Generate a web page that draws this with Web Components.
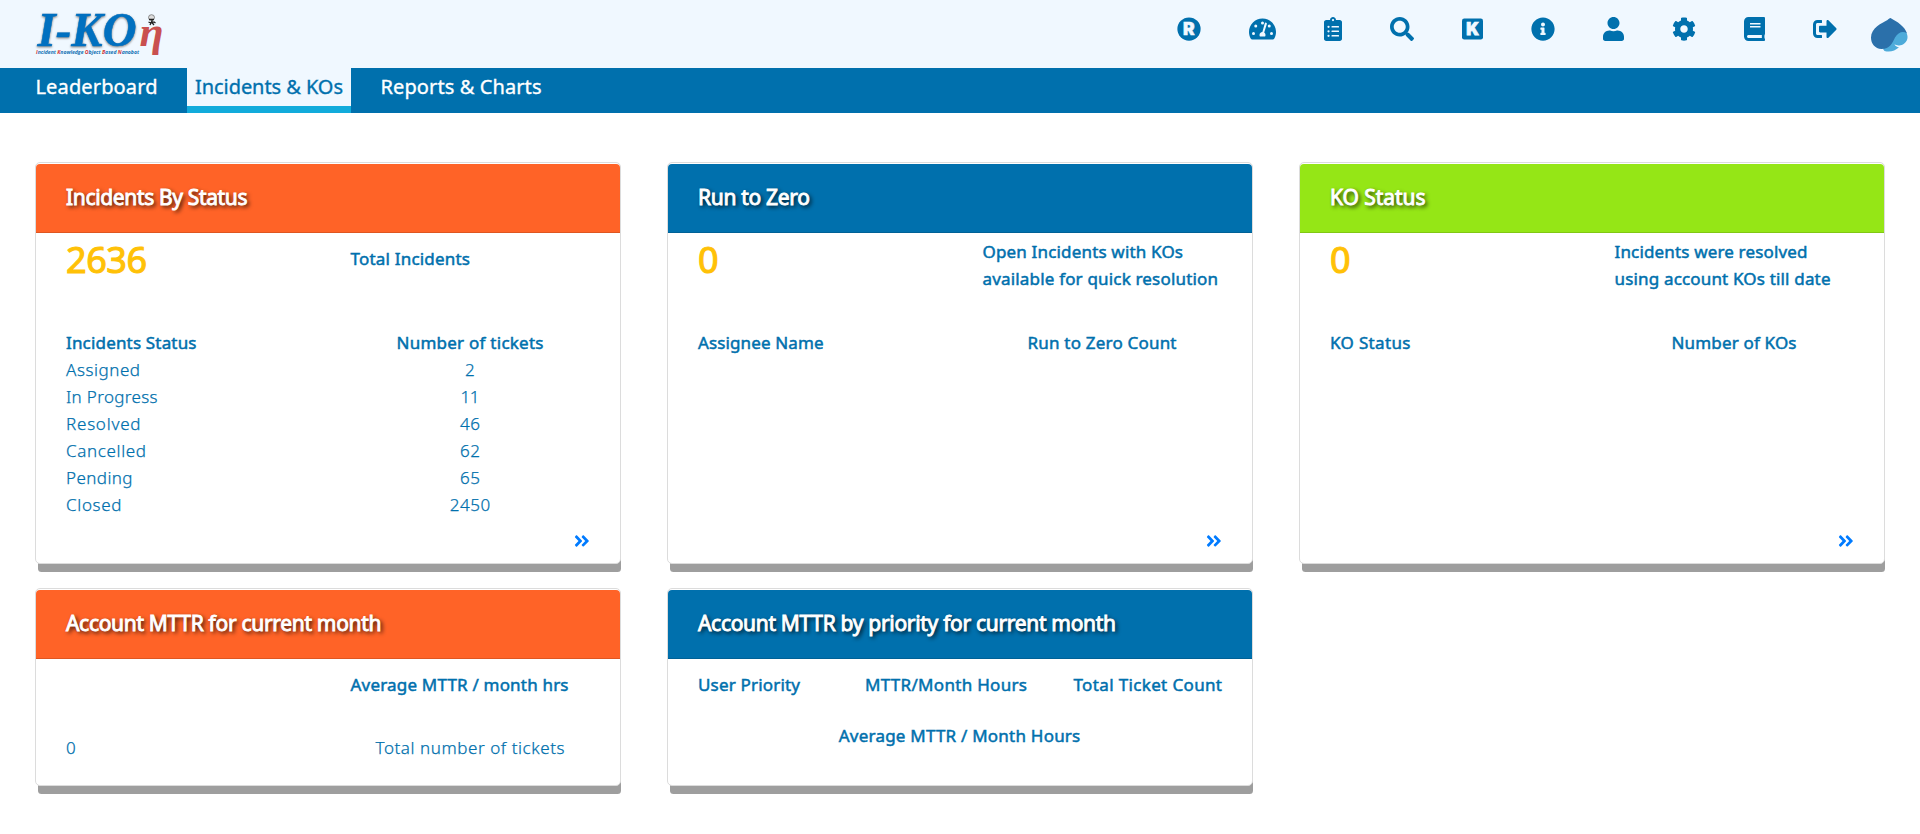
<!DOCTYPE html>
<html lang="en">
<head>
<meta charset="utf-8">
<title>I-KON</title>
<style>
html,body{margin:0;height:100%;background:#fff;overflow:hidden}
body{font-family:"Noto Sans","Open Sans",sans-serif;color:#0070ad;font-size:17px;line-height:27px}
</style>
</head>
<body>
<ikon-app></ikon-app>
<script>
const sheet = (host, html) => { host.attachShadow({mode:'open'}).innerHTML = html; return host.shadowRoot; };

/* Text run tracked to an exact measure given by the w attribute. */
class FitText extends HTMLElement {
  constructor(){ super(); sheet(this, `<style>:host{display:inline-block;white-space:nowrap;text-align:left}</style><span><slot></slot></span>`); }
  connectedCallback(){
    const w = parseFloat(this.getAttribute('w')), n = this.textContent.length;
    if(!w) return;
    const span = this.shadowRoot.querySelector('span');
    const natural = span.getBoundingClientRect().width;
    if(n > 1) span.style.letterSpacing = ((w - natural) / (n - 1)).toFixed(3) + 'px';
    this.style.width = w + 'px';
  }
}

const ICONS = {
  registered:[512,`<circle cx="256" cy="256" r="248"/><text x="254" y="390" text-anchor="middle" font-family="Inter" font-weight="900" font-size="372" fill="#f0f8ff" stroke="#f0f8ff" stroke-width="10">R</text>`],
  gauge:[576,`<path d="M288 32C128.94 32 0 160.94 0 320c0 52.8 14.25 102.26 39.06 144.8 5.61 9.62 16.3 15.2 27.44 15.2h443c11.14 0 21.83-5.58 27.44-15.2C561.75 422.26 576 372.8 576 320c0-159.06-128.94-288-288-288z"/><g fill="#f0f8ff"><circle cx="96" cy="352" r="32"/><circle cx="144" cy="192" r="32"/><circle cx="288" cy="128" r="32"/><circle cx="432" cy="192" r="32"/><circle cx="480" cy="352" r="32"/><path d="M336 136c4-13 16-20 29-16s20 17 16 30l-57 180c17 11 28 31 28 54 0 12-3 23-9 32H233c-6-9-9-20-9-32 0-34 27-62 61-64z"/></g>`],
  clipboard:[384,`<path d="M336 64h-80c0-35.300-28.700-64-64-64s-64 28.700-64 64H48C21.500 64 0 85.500 0 112v352c0 26.500 21.500 48 48 48h288c26.500 0 48-21.500 48-48V112c0-26.500-21.500-48-48-48z"/><g fill="#f0f8ff"><circle cx="192" cy="64" r="24"/><circle cx="96" cy="208" r="24"/><circle cx="96" cy="304" r="24"/><circle cx="96" cy="400" r="24"/><rect x="160" y="192" width="160" height="32" rx="8"/><rect x="160" y="288" width="160" height="32" rx="8"/><rect x="160" y="384" width="160" height="32" rx="8"/></g>`],
  search:[512,`<path d="M505 442.700L405.300 343c-4.500-4.500-10.600-7-17-7H372c27.600-35.300 44-79.700 44-128C416 93.100 322.900 0 208 0S0 93.100 0 208s93.100 208 208 208c48.300 0 92.700-16.400 128-44v16.300c0 6.400 2.500 12.500 7 17l99.700 99.700c9.400 9.400 24.600 9.400 33.900 0l28.300-28.300c9.400-9.400 9.400-24.600.1-34zM208 336c-70.700 0-128-57.200-128-128 0-70.700 57.200-128 128-128 70.700 0 128 57.200 128 128 0 70.700-57.200 128-128 128z"/>`],
  knowledge:[448,`<rect y="32" width="448" height="448" rx="48"/><text x="228" y="384" text-anchor="middle" font-family="Inter" font-weight="900" font-size="360" fill="#f0f8ff" stroke="#f0f8ff" stroke-width="16">K</text>`],
  info:[512,`<path d="M256 8C119.043 8 8 119.083 8 256c0 136.997 111.043 248 248 248s248-111.003 248-248C504 119.083 392.957 8 256 8zm0 110c23.196 0 42 18.804 42 42s-18.804 42-42 42-42-18.804-42-42 18.804-42 42-42zm56 254c0 6.627-5.373 12-12 12h-88c-6.627 0-12-5.373-12-12v-24c0-6.627 5.373-12 12-12h12v-64h-12c-6.627 0-12-5.373-12-12v-24c0-6.627 5.373-12 12-12h64c6.627 0 12 5.373 12 12v100h12c6.627 0 12 5.373 12 12v24z"/>`],
  user:[448,`<path d="M224 256c70.700 0 128-57.300 128-128S294.700 0 224 0 96 57.300 96 128s57.300 128 128 128zm89.600 32h-16.700c-22.200 10.200-46.900 16-72.900 16s-50.600-5.800-72.900-16h-16.700C60.200 288 0 348.200 0 422.400V464c0 26.500 21.500 48 48 48h352c26.500 0 48-21.500 48-48v-41.600c0-74.200-60.200-134.400-134.400-134.400z"/>`],
  cog:[512,`<path d="M487.400 315.700l-42.600-24.600c4.300-23.200 4.300-47 0-70.200l42.600-24.600c4.900-2.800 7.100-8.600 5.500-14-11.100-35.600-30-67.800-54.700-94.600-3.800-4.100-10-5.100-14.800-2.300L380.800 110c-17.900-15.400-38.500-27.300-60.800-35.100V25.800c0-5.600-3.900-10.500-9.400-11.700-36.700-8.200-74.300-7.800-109.200 0-5.500 1.200-9.400 6.100-9.400 11.700V75c-22.200 7.900-42.800 19.800-60.800 35.100L88.700 85.500c-4.900-2.800-11-1.900-14.800 2.300-24.700 26.700-43.600 58.900-54.700 94.600-1.700 5.400.6 11.200 5.500 14L67.300 221c-4.300 23.200-4.300 47 0 70.200l-42.600 24.600c-4.900 2.800-7.100 8.600-5.500 14 11.100 35.600 30 67.800 54.700 94.600 3.800 4.100 10 5.100 14.800 2.300l42.600-24.600c17.900 15.400 38.500 27.300 60.800 35.100v49.200c0 5.600 3.900 10.500 9.400 11.700 36.700 8.200 74.300 7.800 109.200 0 5.500-1.200 9.400-6.100 9.400-11.700v-49.200c22.200-7.900 42.800-19.800 60.800-35.100l42.600 24.600c4.900 2.800 11 1.900 14.800-2.300 24.700-26.700 43.600-58.900 54.700-94.600 1.500-5.500-.7-11.300-5.600-14.100zM256 336c-44.100 0-80-35.900-80-80s35.900-80 80-80 80 35.900 80 80-35.900 80-80 80z"/>`],
  book:[448,`<path d="M448 360V24c0-13.300-10.700-24-24-24H96C43 0 0 43 0 96v320c0 53 43 96 96 96h328c13.300 0 24-10.700 24-24v-16c0-7.500-3.500-14.300-8.900-18.700-4.200-15.400-4.200-59.300 0-74.700 5.400-4.300 8.900-11.100 8.900-18.600zM128 134c0-3.300 2.700-6 6-6h212c3.300 0 6 2.700 6 6v20c0 3.300-2.700 6-6 6H134c-3.300 0-6-2.700-6-6v-20zm0 64c0-3.300 2.700-6 6-6h212c3.300 0 6 2.700 6 6v20c0 3.300-2.700 6-6 6H134c-3.300 0-6-2.700-6-6v-20zm253.400 250H96c-17.700 0-32-14.300-32-32 0-17.600 14.400-32 32-32h285.400c-1.900 17.100-1.900 46.900 0 64z"/>`],
  signout:[512,`<path d="M497 273L329 441c-15 15-41 4.500-41-17v-96H152c-13.300 0-24-10.700-24-24v-96c0-13.300 10.700-24 24-24h136V88c0-21.400 25.900-32 41-17l168 168c9.300 9.400 9.300 24.600 0 34zM192 436v-40c0-6.600-5.400-12-12-12H96c-17.700 0-32-14.300-32-32V160c0-17.700 14.300-32 32-32h84c6.600 0 12-5.400 12-12V76c0-6.600-5.400-12-12-12H96c-53 0-96 43-96 96v192c0 53 43 96 96 96h84c6.600 0 12-5.400 12-12z"/>`],
  more:[448,`<path d="M224.300 273l-136 136c-9.400 9.400-24.600 9.400-33.900 0l-22.600-22.600c-9.400-9.400-9.400-24.600 0-33.900l96.400-96.400-96.400-96.400c-9.400-9.400-9.400-24.600 0-33.900L54.300 103c9.400-9.400 24.600-9.400 33.900 0l136 136c9.500 9.400 9.500 24.600.1 34zm192-34l-136-136c-9.400-9.400-24.600-9.400-33.900 0l-22.600 22.600c-9.400 9.400-9.400 24.600 0 33.900l96.400 96.400-96.400 96.400c-9.400 9.400-9.400 24.600 0 33.900l22.600 22.600c9.400 9.400 24.600 9.400 33.900 0l136-136c9.400-9.200 9.400-24.400 0-33.800z"/>`]
};
class AppIcon extends HTMLElement {
  constructor(){
    super();
    const [w, body] = ICONS[this.getAttribute('name')], s = +(this.getAttribute('size') || 24);
    sheet(this, `<style>:host{display:block;flex:none}svg{display:block;fill:currentColor}</style><svg width="${w/512*s}" height="${s}" viewBox="0 0 ${w} 512">${body}</svg>`);
  }
}

class BrandLogo extends HTMLElement {
  constructor(){ super(); sheet(this, `<style>:host{display:block;flex:none}svg{display:block;overflow:visible}
    .word{filter:drop-shadow(.5px 1.500px .8px rgba(60,50,40,.6))}</style>
    <svg width="130" height="48" viewBox="36 10 130 48">
      <text class="word" x="37.500" y="45.500" textLength="99" lengthAdjust="spacingAndGlyphs" font-family="Liberation Serif" font-weight="700" font-style="italic" font-size="48" fill="#0070c0" stroke="#0070c0" stroke-width=".5">I-KO</text>
      <text x="139.500" y="46" textLength="24" lengthAdjust="spacingAndGlyphs" font-family="Liberation Serif" font-weight="700" font-style="italic" font-size="43" fill="#c9504f">η</text>
      <g><ellipse cx="151.500" cy="17.500" rx="3" ry="2.800" fill="#ddd" stroke="#666" stroke-width=".7"/><path d="M149 19.500h5M148.500 22l2.500 1 3-1 1.500 1M150 25l1.500-3 2.500 3M152 20v3" stroke="#222" stroke-width="1.300" fill="none"/></g>
      <text x="36" y="54" textLength="103" lengthAdjust="spacingAndGlyphs" font-family="Open Sans" font-weight="700" font-style="italic" font-size="6" fill="#1472b4"><tspan fill="#d0322f">I</tspan>ncident <tspan fill="#d0322f">K</tspan>nowledge <tspan fill="#d0322f">O</tspan>bject <tspan fill="#d0322f">B</tspan>ased <tspan fill="#d0322f">N</tspan>anobot</text>
    </svg>`); }
}

class SpadeLogo extends HTMLElement {
  constructor(){ super(); sheet(this, `<style>:host{display:block;flex:none}svg{display:block}</style>
    <svg width="38" height="36" viewBox="0 0 38 36">
      <path fill="#4dabda" d="M36 15C38.500 19 38 24 34 26.800 32 28.200 30 28.700 27.500 28.200 25.500 27.800 25 27.500 24.500 27.500 25 29 27 30 29 30.300 25 34 20 35.500 14.500 34L13 32 22 22 30 14z"/>
      <path fill="#2b70aa" d="M20.500 1C27 4.500 35 9.500 37 16.500 33 13.500 28 15.500 25 20.500 22.500 26 20 32 11.500 32 5 31.500 1 27 1 20.500 1 11 12 6 17.500 3 18.500 2 19.500 1 20.500 1z"/>
    </svg>`); }
}

class TopBar extends HTMLElement {
  constructor(){ super(); sheet(this, `<style>
    :host{display:flex;height:68px;box-sizing:border-box;background:#f0f8ff;padding:10px 12px 0 36px;justify-content:space-between;align-items:flex-start}
    .tools{display:flex;align-items:flex-start}.icons{display:flex;gap:48px;padding-top:7px;margin-right:32.700px}spade-logo{padding-top:7px}</style>
    <brand-logo></brand-logo><div class="tools"><div class="icons">${['registered','gauge','clipboard','search','knowledge','info','user','cog','book','signout'].map(n=>`<app-icon name="${n}"></app-icon>`).join('')}</div><spade-logo></spade-logo></div>`); }
}

class NavTab extends HTMLElement {
  constructor(){ super(); sheet(this, `<style>:host{display:block;height:45px;box-sizing:border-box;color:#fff;line-height:37px;font-size:20px;-webkit-text-stroke:.35px;padding:0 8px}
    :host([active]){background:#f0f8ff;color:#0070ad;border-bottom:7px solid #12abdb}</style><slot></slot>`); }
}
class NavBar extends HTMLElement {
  constructor(){ super(); sheet(this, `<style>:host{display:flex;height:45px;background:#0070ad;padding-left:27.500px;gap:21.500px}</style><slot></slot>`); }
}

class DashCard extends HTMLElement {
  constructor(){ super(); sheet(this, `<style>
    :host{display:flex;flex-direction:column;box-sizing:border-box;border:1px solid #dcdcdc;border-radius:5px;background:#fff;padding-top:1px;box-shadow:1.500px 9.500px 0 -1.500px #9e9e9e}
    header{height:69px;box-sizing:border-box;padding-left:30px;background:var(--tone);border-bottom:1px solid rgba(0,0,0,.13);border-radius:4px 4px 0 0;color:#fff;font-size:21px;line-height:67px;-webkit-text-stroke:.9px;text-shadow:2px 2px 4px #000}
    .body{flex:1;display:flex;flex-direction:column;padding:0 30px}
    .more{display:flex;justify-content:flex-end;margin-top:auto;padding-bottom:13px;color:#007bff}</style>
    <header><slot name="title"></slot></header><div class="body"><slot></slot>${this.hasAttribute('more')?'<div class="more"><app-icon name="more" size="18"></app-icon></div>':''}</div>`); }
}
/* Headline number with its caption. */
class CardSummary extends HTMLElement {
  constructor(){ super(); sheet(this, `<style>:host{display:grid;grid-template-columns:284.500px 238px;height:96px}
    .n{color:#ffc107;font-size:36px;line-height:54px;-webkit-text-stroke:1.100px}.c{display:flex;flex-direction:column;padding-top:var(--drop,5.400px);-webkit-text-stroke:.5px}</style>
    <div class="n"><slot name="value"></slot></div><div class="c"><slot></slot></div>`); }
}
class DataRow extends HTMLElement {
  constructor(){ super(); sheet(this, `<style>:host{display:grid;grid-template-columns:var(--cols,285px 238px);min-height:27px;font-weight:300;-webkit-text-stroke:.25px}
    :host([head]){font-weight:400;-webkit-text-stroke:.5px} ::slotted([mid]){justify-self:center} ::slotted([end]){justify-self:end} ::slotted([wide]){grid-column:1/-1}</style><slot></slot>`); }
}

class IkonApp extends HTMLElement {
  constructor(){ super(); 
    const row = (a,wa,b,wb) => `<data-row><fit-text w="${wa}">${a}</fit-text><fit-text mid w="${wb}">${b}</fit-text></data-row>`;
    sheet(this, `<style>:host{display:block}
    main{display:grid;grid-template-columns:repeat(3,586px);grid-template-rows:402px 198px;gap:24px 46px;padding:49px 35px 0}
    .o{--tone:#ff6327}.b{--tone:#0070ad}.g{--tone:#95e616}</style>
    <top-bar></top-bar>
    <nav-bar><nav-tab><fit-text w="122">Leaderboard</fit-text></nav-tab><nav-tab active><fit-text w="148">Incidents &amp; KOs</fit-text></nav-tab><nav-tab><fit-text w="161">Reports &amp; Charts</fit-text></nav-tab></nav-bar>
    <main>
      <dash-card class="o" more><fit-text slot="title" w="181.5">Incidents By Status</fit-text>
        <card-summary style="--drop:12px"><fit-text slot="value" w="81">2636</fit-text><fit-text w="119.5">Total Incidents</fit-text></card-summary>
        <data-row head><fit-text w="130.5">Incidents Status</fit-text><fit-text mid w="147">Number of tickets</fit-text></data-row>
        ${row('Assigned',74,'2',10)}${row('In Progress',91.5,'11',19)}${row('Resolved',74.5,'46',20)}${row('Cancelled',80,'62',20)}${row('Pending',66.5,'65',20)}${row('Closed',55.5,'2450',40.5)}
      </dash-card>
      <dash-card class="b" more><fit-text slot="title" w="112">Run to Zero</fit-text>
        <card-summary><fit-text slot="value">0</fit-text><fit-text w="200.5">Open Incidents with KOs</fit-text><fit-text w="235.5">available for quick resolution</fit-text></card-summary>
        <data-row head><fit-text w="125.5">Assignee Name</fit-text><fit-text mid w="149">Run to Zero Count</fit-text></data-row>
      </dash-card>
      <dash-card class="g" more><fit-text slot="title" w="95.5">KO Status</fit-text>
        <card-summary><fit-text slot="value">0</fit-text><fit-text w="193">Incidents were resolved</fit-text><fit-text w="216">using account KOs till date</fit-text></card-summary>
        <data-row head><fit-text w="80.5">KO Status</fit-text><fit-text mid w="125">Number of KOs</fit-text></data-row>
      </dash-card>
      <dash-card class="o"><fit-text slot="title" w="315.5">Account MTTR for current month</fit-text>
        <data-row head style="padding:12px 0 36px;--cols:284.500px 238px"><span></span><fit-text w="218">Average MTTR / month hrs</fit-text></data-row>
        ${row('0',10,'Total number of tickets',189)}
      </dash-card>
      <dash-card class="b"><fit-text slot="title" w="418">Account MTTR by priority for current month</fit-text>
        <data-row head style="padding:12px 0 24px;--cols:167px 161px 196px"><fit-text w="102">User Priority</fit-text><fit-text w="162">MTTR/Month Hours</fit-text><fit-text end w="148.5">Total Ticket Count</fit-text></data-row>
        <data-row head><fit-text wide mid w="241.5">Average MTTR / Month Hours</fit-text></data-row>
      </dash-card>
    </main>`); }
}
for (const [n,c] of Object.entries({'ikon-app':IkonApp,'top-bar':TopBar,'brand-logo':BrandLogo,'spade-logo':SpadeLogo,'app-icon':AppIcon,'nav-bar':NavBar,'nav-tab':NavTab,'dash-card':DashCard,'card-summary':CardSummary,'data-row':DataRow,'fit-text':FitText})) customElements.define(n,c);
</script>
</body>
</html>
